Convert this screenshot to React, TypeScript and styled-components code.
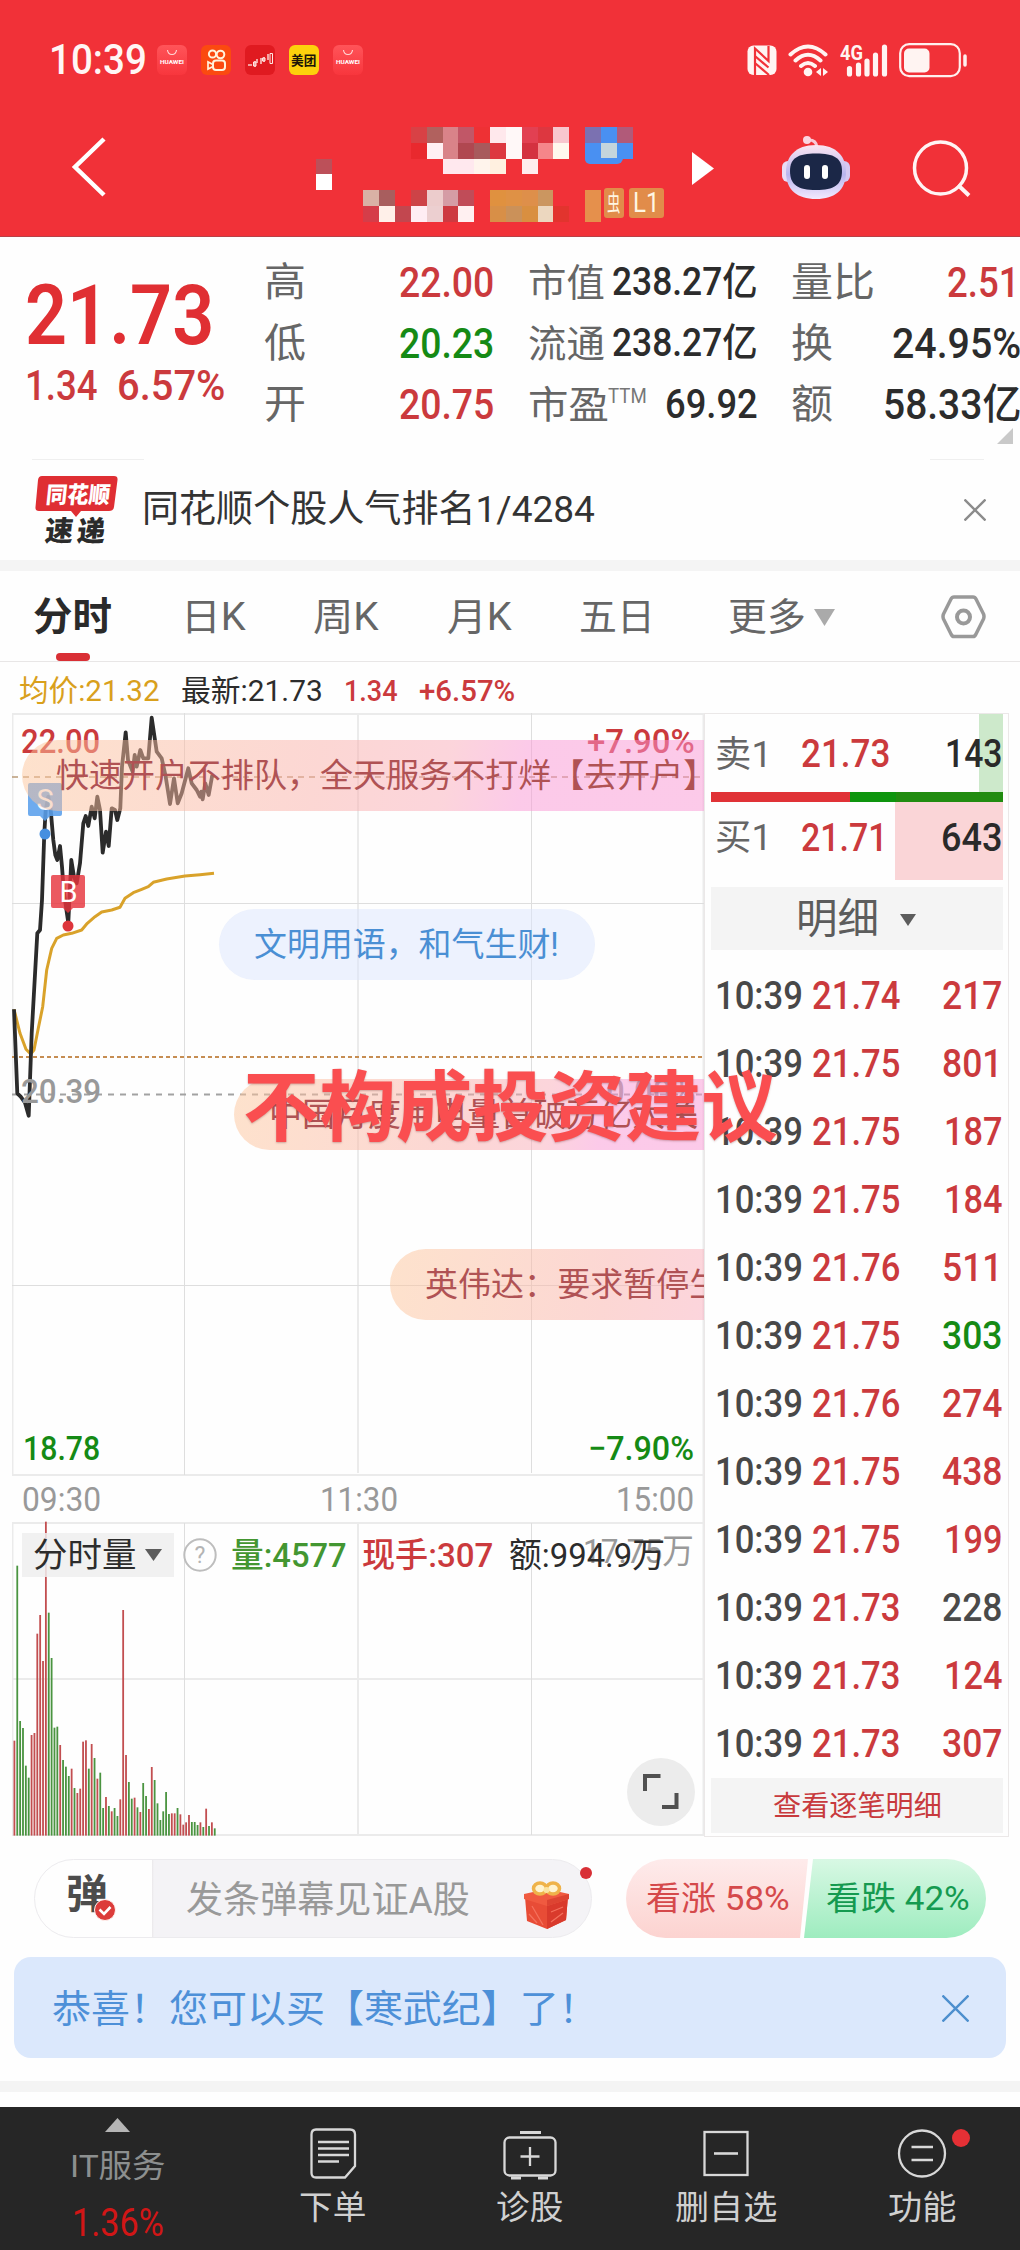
import React, { useLayoutEffect, useRef, useState } from 'react';
import styled, { createGlobalStyle } from 'styled-components';

const RED = '#cb3a3d';
const GREEN = '#158a15';

const GlobalStyle = createGlobalStyle`
  * { box-sizing: border-box; }
  body {
    margin: 0;
    background: #fefefe;
    font-family: Roboto, "Noto Sans CJK SC", sans-serif;
    color: #2c2c2c;
  }
  svg { display: block; flex: none; }
`;

/* Text squeezed horizontally to a given width, like the condensed numerals of the app */
const FitBox = styled.span<{ $w: number; $s: number; $c?: string; $b?: number }>`
  display: inline-block;
  flex: none;
  width: ${(p) => p.$w}px;
  height: ${(p) => p.$s}px;
  line-height: ${(p) => p.$s}px;
  font-size: ${(p) => p.$s}px;
  font-weight: ${(p) => p.$b ?? 400};
  color: ${(p) => p.$c ?? 'inherit'};
  white-space: nowrap;
`;
const FitInner = styled.span<{ $pad: number }>`
  display: inline-block;
  margin-left: ${(p) => -p.$pad}px;
  transform-origin: 0 50%;
  white-space: pre;
`;

type FitProps = { w: number; s: number; c?: string; b?: number; children: React.ReactNode };
function Fit({ w, s, c, b, children }: FitProps) {
  const ref = useRef<HTMLSpanElement>(null);
  const [scale, setScale] = useState(1);
  const pad = s * 0.05;
  useLayoutEffect(() => {
    if (ref.current) setScale((w + pad * 2) / ref.current.offsetWidth);
  }, [w, pad, children]);
  return (
    <FitBox $w={w} $s={s} $c={c} $b={b}>
      <FitInner ref={ref} $pad={pad} style={{ transform: `scaleX(${scale})` }}>
        {children}
      </FitInner>
    </FitBox>
  );
}

const Screen = styled.main`
  display: flex;
  flex-direction: column;
  width: 1020px;
  height: 2250px;
  overflow: hidden;
  background: #fefefe;
`;

/* ---------- header ---------- */
const Header = styled.header`
  flex: none;
  height: 237px;
  background: #f13138;
  border-bottom: 1px solid #b84046;
`;
const StatusBar = styled.div`
  display: flex;
  align-items: center;
  height: 120px;
  padding: 0 52px 0 51px;
`;
const AppIcons = styled.div`
  display: flex;
  gap: 14px;
  margin-left: 12px;
`;
const StatusIcons = styled.div`
  display: flex;
  align-items: center;
  gap: 11px;
  margin-left: auto;
`;
const MeituanIcon = styled.span`
  width: 30px;
  height: 30px;
  border-radius: 6px;
  background: #fdd10c;
  color: #1b1508;
  display: flex;
  align-items: center;
  justify-content: center;
`;
const HuaweiBag = styled.span`
  width: 30px;
  height: 30px;
  border-radius: 6px;
  background: linear-gradient(#ff5459, #f8363d);
`;
const AppBar = styled.div`
  display: grid;
  grid-template-columns: 316px 376px 89px 120px 119px;
  height: 116px;
  color: #fff;
`;
const BackSlot = styled.div`
  padding: 15px 0 0 70px;
`;
const PlaySlot = styled.div`
  padding-top: 32px;
`;
const RobotSlot = styled.div`
  padding-top: 15px;
`;
const SearchSlot = styled.div`
  padding: 19px 0 0 11px;
`;
const TitleSlot = styled.div`
  position: relative;
  padding-top: 7px;
`;
const Mosaic = styled.div`
  display: grid;
  grid-template-columns: repeat(20, 15.83px);
  grid-template-rows: repeat(6, 15.8px);
`;
const Cell = styled.i<{ $c: string }>`
  background: ${(p) => p.$c};
`;
const Badges = styled.div`
  position: absolute;
  left: 288px;
  top: 68px;
  display: flex;
  gap: 5px;
`;
const Badge = styled.span<{ $w: number }>`
  width: ${(p) => p.$w}px;
  height: 30px;
  overflow: hidden;
  border-radius: 3px;
  background: #e18c4a;
  color: #fff6e4;
  display: flex;
  align-items: center;
  justify-content: center;
`;

const _ = '';
const mosaicRows: string[][] = [
  [_, _, _, _, _, _, '#d84145', '#b1615e', '#d98389', '#c15767', '#ee3134', '#ffe8ec', '#fff8f8', '#e24052', '#dd3740', '#f8c6ce', _, '#7b71b1', '#4990f2', '#b15a79'],
  [_, _, _, _, _, _, '#e9292e', '#fff0f3', '#d98389', '#b04750', '#a85a5c', '#dd3840', '#fff8f8', '#d43140', '#f5868a', '#fff8ee', _, '#4990f2', '#c5d5dc', '#4990f2'],
  ['#bc5059', _, _, _, _, _, _, _, '#ffe8ee', '#ffe8ee', '#fff4ec', '#fff0e0', _, '#ffecee', _, _, _, _, _, _],
  ['#ffffff', _, _, _, _, _, _, _, _, _, _, _, _, _, _, _, _, _, _, _],
  [_, _, _, '#d9b1a5', '#a85e5e', _, '#cd4347', '#eccccc', '#d59ca5', '#c04c58', _, '#e0913f', '#df9145', '#de8f4a', '#cb9660', _, _, '#e5904c', _, _],
  [_, _, _, '#d53d49', '#fff0e9', '#c2474f', '#ffedf3', '#eccfd0', '#cd3a41', '#fff0f1', _, '#d88f47', '#cb9159', '#d98f40', '#ecd7bf', '#e2342e', _, '#e5904c', _, _],
];
const Bulge = styled.i`
  position: absolute;
  left: 269px;
  top: 38px;
  width: 38px;
  height: 6px;
  border-radius: 0 0 20px 16px;
  background: #4990f2;
`;

function StatusGlyphs() {
  return (
    <StatusIcons>
      <svg width="30" height="31" viewBox="0 0 30 31">
        <rect x=".5" y=".5" width="29" height="29.500" rx="6" fill="#fff4f2" />
        <path d="M8 30V3.500L21.500 16V1M8.500 11.500 21.500 22.500M8.500 18.500 22 30" fill="none" stroke="#f13138" strokeWidth="2.200" />
      </svg>
      <svg width="41" height="33" viewBox="0 0 41 33" fill="none" stroke="#fff4f2" strokeWidth="4" strokeLinecap="round">
        <path d="M2.500 10.500Q20 -5.500 37.500 10.500M7.500 16.500Q20 5 32.500 16.500M13 22Q20 16 27 22" />
        <circle cx="20" cy="28" r="4.300" fill="#fff4f2" stroke="none" />
        <path d="M33 24v8l-5-4ZM35 24v8l5-4Z" fill="#fff4f2" stroke="none" />
      </svg>
      <svg width="48" height="33" viewBox="0 0 48 33">
        <text x="0" y="16" fontSize="20" fontWeight="700" fill="#fff4f2" textLength="23" lengthAdjust="spacingAndGlyphs">4G</text>
        <path d="M9.500 24.500V30M18.500 21V30M27 17V30M35.500 11V30M44.500 3V30" stroke="#fff4f2" strokeWidth="5.200" strokeLinecap="round" />
      </svg>
      <svg width="69" height="35" viewBox="0 0 69 35">
        <rect x="1.200" y="1.200" width="59.600" height="32" rx="9" fill="none" stroke="#fff0ee" strokeWidth="2.200" />
        <rect x="5" y="5.500" width="25.500" height="24" rx="5" fill="#fff4f2" />
        <path d="M66 13V22" stroke="#fff0ee" strokeWidth="3.500" strokeLinecap="round" />
      </svg>
    </StatusIcons>
  );
}

function Huawei() {
  return (
    <HuaweiBag>
      <svg width="30" height="30" viewBox="0 0 30 30">
        <path d="M10.500 5Q11 9.500 15 9.500Q19 9.500 19.500 5" fill="none" stroke="#ffd9d8" strokeWidth="1.100" />
        <text x="3" y="19.300" fontSize="6" fontWeight="700" fill="#fff" textLength="24" lengthAdjust="spacingAndGlyphs">HUAWEI</text>
      </svg>
    </HuaweiBag>
  );
}

/* ---------- quote ---------- */
const Quote = styled.section`
  flex: none;
  position: relative;
  display: grid;
  grid-template-columns: 265px 264px 263px 228px;
  height: 222px;
`;
const PriceCol = styled.div`
  padding: 37px 0 0 29px;
`;
const ChangeRow = styled.div`
  display: flex;
  gap: 24px;
  margin: 7px 0 0 -2px;
`;
const StatCol = styled.div<{ $r: number }>`
  padding: 15px ${(p) => p.$r}px 0 1px;
`;
const StatRow = styled.div<{ $r?: number }>`
  display: flex;
  align-items: center;
  justify-content: space-between;
  height: 61px;
  padding-right: ${(p) => p.$r ?? 0}px;
`;
const PeLabel = styled.span`
  display: flex;
  gap: 2px;
`;
const Corner = styled.i`
  position: absolute;
  right: 7px;
  bottom: 15px;
  border: 8px solid transparent;
  border-right-color: #c9c9c9;
  border-bottom-color: #c9c9c9;
`;

/* ---------- notice ---------- */
const Notice = styled.section`
  flex: none;
  display: flex;
  align-items: center;
  height: 101px;
  padding: 0 34px;
  background:
    linear-gradient(#efefef, #efefef) 32px 0 / 112px 1px no-repeat,
    linear-gradient(#efefef, #efefef) 930px 0 / 54px 1px no-repeat;
`;
const NoticeLogo = styled.div`
  width: 110px;
  height: 84px;
  padding-top: 7px;
`;
const NoticeClose = styled.div`
  margin-left: auto;
`;
const Band = styled.div`
  flex: none;
  height: 11px;
  background: #f4f4f4;
`;

/* ---------- tabs ---------- */
const Tabs = styled.nav`
  flex: none;
  display: grid;
  grid-template-columns: 148px 132px 134px 132px 149px 211px 45px;
  padding-left: 35px;
  height: 91px;
  border-bottom: 1px solid #e8e6e6;
`;
const Tab = styled.div`
  display: flex;
  align-items: center;
  gap: 10px;
  padding-top: 2px;
  color: #666;
`;
const ActiveTab = styled.div`
  display: flex;
  flex-direction: column;
  justify-content: flex-end;
  gap: 16px;
  color: #2a2a2a;
  &::after {
    content: '';
    width: 34px;
    height: 8px;
    margin-left: 21px;
    border-radius: 4px;
    background: #d92f35;
  }
`;

/* ---------- main ---------- */
const Main = styled.section`
  flex: none;
  position: relative;
  display: flex;
  height: 1176px;
`;
const ChartCol = styled.div`
  width: 704px;
`;
const InfoRow = styled.div`
  display: flex;
  align-items: center;
  height: 46px;
  padding: 11px 0 0 20px;
  gap: 24px;
`;
const ChartArea = styled.div`
  position: relative;
  height: 1130px;
  margin-left: 12px;
  overflow: hidden;
`;
const Mark = styled.div<{ $x: number; $y: number }>`
  position: absolute;
  display: flex;
  left: ${(p) => p.$x - 12}px;
  top: ${(p) => p.$y - 708}px;
  transform: translateY(-50%);
`;
/* $end is the distance from the left tip at which the gradient turns fully pink */
const Danmu = styled.div<{ $x: number; $y: number; $w?: number; $blue?: boolean; $in?: number; $end?: number }>`
  position: absolute;
  left: ${(p) => p.$x - 12}px;
  top: ${(p) => p.$y - 708}px;
  width: ${(p) => p.$w ?? 704 - p.$x}px;
  height: 71px;
  overflow: hidden;
  display: flex;
  align-items: center;
  padding-left: ${(p) => p.$in ?? 37}px;
  border-radius: ${(p) => (p.$blue ? '36px' : '36px 0 0 36px')};
  color: ${(p) => (p.$blue ? '#4a8fd4' : '#b05254')};
  background: ${(p) =>
    p.$blue
      ? 'rgba(219,230,253,.5)'
      : `linear-gradient(100deg, rgba(253,198,155,.5), rgba(250,176,170,.5) ${(p.$end ?? 480) * 0.6}px, rgba(250,172,185,.5) ${(p.$end ?? 480) * 0.85}px, rgba(250,150,212,.5) ${p.$end ?? 480}px)`};
`;
const VolumeHead = styled.div`
  position: absolute;
  left: 10px;
  top: 825px;
  display: flex;
  align-items: center;
  height: 44px;
`;
const VolumeTag = styled.div`
  display: flex;
  align-items: center;
  gap: 10px;
  width: 152px;
  height: 44px;
  padding-left: 13px;
  margin-right: 9px;
  background: rgba(238, 238, 238, 0.85);
`;
const VolumeStats = styled.div`
  display: flex;
  gap: 19px;
  margin-left: 16px;
`;
const ExpandButton = styled.div`
  position: absolute;
  left: 615px;
  top: 1050px;
  width: 68px;
  height: 68px;
  border-radius: 50%;
  background: #ececec;
  display: grid;
  place-items: center;
`;
const Watermark = styled.div`
  position: absolute;
  left: 247px;
  top: 409px;
  height: 80px;
  text-shadow: 0 1px 2px rgba(120, 60, 60, 0.35);
`;

/* ---------- order panel ---------- */
const Panel = styled.aside`
  width: 305px;
  margin-top: 51px;
  height: 1124px;
  padding: 0 5px 0 6px;
  border: 1px solid #ebe8e8;
`;
const Depth = styled.div<{ $from: number; $bg: string; $h: number; $shift: number }>`
  display: grid;
  grid-template-columns: 86px 1fr auto;
  align-items: center;
  height: ${(p) => p.$h}px;
  padding: ${(p) => Math.max(p.$shift, 0)}px 2px ${(p) => Math.max(-p.$shift, 0)}px 6px;
  color: #2a2a2a;
  background: linear-gradient(90deg, transparent ${(p) => p.$from}px, ${(p) => p.$bg} ${(p) => p.$from}px);
`;
const RatioBar = styled.div`
  height: 10px;
  background: linear-gradient(90deg, #e03236 139px, #0e950e 139px, #0e950e 185px, #218c10 185px);
`;
const DetailHead = styled.div`
  display: flex;
  align-items: center;
  justify-content: center;
  gap: 22px;
  height: 63px;
  margin: 7px 0 12px;
  padding: 2px 0 0;
  background: #f4f4f4;
  color: #5c5c5c;
`;
const Tick = styled.div`
  display: grid;
  grid-template-columns: 97px 1fr auto;
  align-items: center;
  height: 68px;
  padding: 1px 2px 0 6px;
`;
const DetailLink = styled.div`
  display: flex;
  align-items: center;
  justify-content: center;
  height: 55px;
  padding-top: 2px;
  background: #f4f4f4;
`;

/* ---------- comment, banner ---------- */
const CommentRow = styled.section`
  flex: none;
  display: flex;
  height: 119px;
  padding: 21px 34px 0;
`;
const CommentPill = styled.div`
  position: relative;
  display: flex;
  width: 558px;
  height: 79px;
  border: 1px solid #ecebee;
  border-radius: 40px;
  background: linear-gradient(90deg, #fefefe 117px, #eae8ea 117px, #f4f3f6 119px);
`;
const DanToggle = styled.div`
  position: relative;
  width: 117px;
  padding: 15px 0 0 33px;
`;
const CheckBadge = styled.div`
  position: absolute;
  left: 59px;
  top: 39px;
`;
const Placeholder = styled.div`
  flex: 1;
  display: flex;
  align-items: center;
  padding: 4px 0 0 36px;
`;
const Gift = styled.div`
  padding: 20px 21px 0 0;
`;
const PillDot = styled.i`
  position: absolute;
  right: -1px;
  top: 7px;
  width: 12px;
  height: 12px;
  border-radius: 50%;
  background: #d83036;
`;
const Vote = styled.div`
  display: flex;
  margin-left: 34px;
  width: 360px;
  height: 79px;
  border-radius: 40px;
  overflow: hidden;
`;
const VoteUp = styled.div`
  width: 182px;
  padding: 23px 0 0 22px;
  background: linear-gradient(#feebeb, #fcd3d0);
  clip-path: polygon(0 0, 100% 0, 174px 100%, 0 100%);
`;
const VoteDown = styled.div`
  width: 182px;
  margin-left: -4px;
  padding: 23px 0 0 24px;
  background: linear-gradient(#d8f8e4, #9eecbf);
  clip-path: polygon(9px 0, 100% 0, 100% 100%, 0 100%);
`;
const Banner = styled.section`
  flex: none;
  display: flex;
  align-items: center;
  justify-content: space-between;
  height: 101px;
  margin: 0 14px 23px;
  padding: 2px 37px 0 40px;
  border-radius: 17px;
  background: #dbe8fc;
`;

/* ---------- bottom nav ---------- */
const BottomNav = styled.nav`
  flex: none;
  display: grid;
  grid-template-columns: 235px 196px 197px 196px 196px;
  height: 143px;
  margin-top: 15px;
  background: #262626;
  color: #d0d0d0;
`;
const NavItem = styled.div`
  position: relative;
  display: flex;
  flex-direction: column;
  align-items: center;
  gap: 10px;
  padding-top: 20px;
`;
const SectorItem = styled.div`
  display: flex;
  flex-direction: column;
  align-items: center;
  padding-top: 11px;
`;
const SectorName = styled.div`
  height: 33px;
  margin: 18px 0 21px;
`;
const NavDot = styled.i`
  position: absolute;
  right: 50px;
  top: 22px;
  width: 18px;
  height: 18px;
  border-radius: 50%;
  background: #e53035;
`;

/* ---------- data ---------- */
const ticks: [string, string, string?][] = [
  ['21.74', '217'],
  ['21.75', '801'],
  ['21.75', '187'],
  ['21.75', '184'],
  ['21.76', '511'],
  ['21.75', '303', GREEN],
  ['21.76', '274'],
  ['21.75', '438'],
  ['21.75', '199'],
  ['21.73', '228', '#4a4a4a'],
  ['21.73', '124'],
  ['21.73', '307'],
];

const pricePts: [number, number][] = [
  [42, 928], [52, 1180], [62, 1190], [75, 1208], [86, 1247], [95, 1000], [112, 700], [120, 690], [126, 600], [133, 400],
  [137, 330], [145, 290], [152, 330], [160, 420], [166, 465], [172, 480], [180, 438], [186, 500], [192, 580], [205, 668],
  [214, 480], [222, 530], [230, 550], [240, 490], [250, 370], [257, 348], [265, 378], [275, 320], [284, 355], [292, 290],
  [300, 330], [308, 458], [318, 395], [326, 438], [335, 325], [345, 330], [352, 360], [361, 325], [366, 200], [377, 97],
  [384, 180], [390, 195], [398, 215], [404, 165], [410, 200], [421, 150], [430, 175], [445, 175], [455, 53], [470, 155],
  [485, 175], [497, 230], [510, 312], [522, 235], [533, 310], [545, 280], [565, 205], [575, 250], [590, 270], [600, 290],
  [604, 275], [608, 298], [616, 250], [626, 285], [637, 225],
];
const avgPts: [number, number][] = [
  [42, 928], [60, 1000], [78, 1048], [92, 1062], [102, 1050], [115, 985], [128, 920], [140, 810], [155, 745], [170, 715],
  [190, 705], [215, 700], [245, 690], [262, 670], [285, 650], [305, 636], [335, 630], [360, 622], [375, 595], [400, 578],
  [425, 568], [445, 560], [460, 547], [500, 537], [555, 528], [600, 524], [642, 520],
];
const toPoints = (pts: [number, number][]) => pts.map(([x, y]) => `${(x / 3).toFixed(1)},${(700 + y / 3).toFixed(1)}`).join(' ');

const volumes =
  'r1052 g527 g993 g1014 g1127 g1163 r1035 r1029 r731 r675 r813 r395 g668 g804 g1013 g1010 r1065 g1110 g1130 g1158 r1136 g1194 r1209 r1196 r1055 r1051 g1136 r1062 g1104 r1166 g1148 g1254 r1221 g1248 r1264 g1254 g1278 r1228 r660 r1095 g1176 g1226 r1223 g1252 r1266 g1179 g1218 r1257 r1131 g1170 g1240 g1290 g1264 g1206 g1272 r1270 r1270 g1254 r1273 r1304 r1297 r1275 g1296 g1296 g1305 r1297 g1311 r1256 g1308 r1297 g1315'.split(' ');

function Chart() {
  return (
    <svg width="692" height="1130" viewBox="12 708 692 1130">
      <path d="M12 714H704M12 1475H704M12 1523H704M12 1679H704M12 1835H704M12.500 713V1475M12.500 1523V1835M703.500 713V1835M358 713V1473M358 1523V1835" stroke="#ebebeb" strokeWidth="2" />
      <path d="M12 903.500H704M12 1285.500H704M184.500 713V1475M531.500 713V1473M184.500 1523V1835M531.500 1523V1835" stroke="#dedede" />
      <path d="M12 777H704" stroke="#b99b78" strokeWidth="1.500" strokeDasharray="6 5" />
      <path d="M12 1057H704" stroke="#c68d52" strokeWidth="2" strokeDasharray="4 3" />
      <path d="M12 1094.500H704" stroke="#a2a2a2" strokeWidth="2" strokeDasharray="6 6" />
      <polyline points={toPoints(avgPts)} fill="none" stroke="#d9a22a" strokeWidth="3" strokeLinejoin="round" />
      <polyline points={toPoints(pricePts)} fill="none" stroke="#2b2b2b" strokeWidth="3.800" strokeLinejoin="round" />
      {volumes.map((v, i) => {
        const top = 1390 + Number(v.slice(1)) / 3;
        return (
          <rect key={i} x={13.500 + i * 2.862} y={top} width="1.800" height={1835.600 - top} fill={v[0] === 'r' ? '#c24e50' : '#4a9440'} />
        );
      })}
      <g fontSize="29" textAnchor="middle" fill="#fff">
        <path d="M30 783H60Q62 783 62 785V814Q62 816 60 816H50L45 821L40 816H30Q28 816 28 814V785Q28 783 30 783Z" fill="#5a9fec" fillOpacity=".88" />
        <text x="45" y="810" fill="#f4f8ff">S</text>
        <circle cx="45" cy="834" r="5.500" fill="#468fe0" />
        <path d="M53 875H83Q85 875 85 877V906Q85 908 83 908H73L68 913L63 908H53Q51 908 51 906V877Q51 875 53 875Z" fill="#e6353d" fillOpacity=".82" />
        <text x="68.500" y="902">B</text>
        <circle cx="68" cy="926" r="5.500" fill="#dd353c" />
      </g>
    </svg>
  );
}

export default function App() {
  return (
    <Screen>
      <GlobalStyle />
      <Header>
        <StatusBar>
          <Fit w={94} s={42} b={500} c="#fff6f5">10:39</Fit>
          <AppIcons>
            <Huawei />
            <svg width="30" height="30" viewBox="0 0 30 30">
              <rect width="30" height="30" rx="6" fill="#fb4a10" />
              <g fill="none" stroke="#fff3dc" strokeWidth="2">
                <circle cx="11.500" cy="9" r="3.600" />
                <circle cx="19.500" cy="9.500" r="3.800" />
                <rect x="12" y="15.500" width="12" height="9.500" rx="3" />
                <path d="M7 17v7l5-2.500v-2Z" strokeWidth="1.700" />
              </g>
            </svg>
            <svg width="30" height="30" viewBox="0 0 30 30">
              <rect width="30" height="30" rx="6" fill="#e01a20" />
              <path d="M3 20h4M10 22v-6M12 14v4M16 19v-6M19 17v-5M23 15v-6" stroke="#fbc9c5" strokeWidth="1.600" />
              <path d="M8.500 17h2.500v4h-2.500ZM17.500 13h2.500v3h-2.500ZM25 8.500h2.500v10H25Z" fill="none" stroke="#ffe8e5" strokeWidth="1" />
            </svg>
            <MeituanIcon><Fit w={24} s={13} b={700}>美团</Fit></MeituanIcon>
            <Huawei />
          </AppIcons>
          <StatusGlyphs />
        </StatusBar>
        <AppBar>
          <BackSlot>
            <svg width="38" height="62" viewBox="70 135 38 62">
              <path d="M104 139 75 167 104 195" fill="none" stroke="#fff" strokeWidth="4.500" />
            </svg>
          </BackSlot>
          <TitleSlot>
            <Mosaic>{mosaicRows.flat().map((c, i) => <Cell key={i} $c={c || 'transparent'} />)}</Mosaic>
            <Bulge />
            <Badges>
              <Badge $w={20}><Fit w={11} s={23}>虫</Fit></Badge>
              <Badge $w={35}><Fit w={24} s={27}>L1</Fit></Badge>
            </Badges>
          </TitleSlot>
          <PlaySlot>
            <svg width="23" height="34"><path d="M0 0 22 16.500 0 33Z" fill="#fff" /></svg>
          </PlaySlot>
          <RobotSlot>
            <svg width="70" height="65" viewBox="780 135 70 65">
              <defs>
                <linearGradient id="shell" x1="0" y1="0" x2="0" y2="1">
                  <stop offset="0" stopColor="#fbe6f2" />
                  <stop offset=".55" stopColor="#b9b4ee" />
                  <stop offset="1" stopColor="#f3eaff" />
                </linearGradient>
              </defs>
              <path d="M806 140Q815 139 816 147" fill="none" stroke="#f8c9d6" strokeWidth="3" />
              <circle cx="806" cy="140" r="4" fill="#fbd4e0" />
              <rect x="781" y="161" width="12" height="21" rx="6" fill="#e9dcf6" />
              <rect x="837" y="161" width="12" height="21" rx="6" fill="#d5c8f2" />
              <path d="M815 145C836 145 845 157 845 172C845 190 834 199 815 199C796 199 785 190 785 172C785 157 794 145 815 145Z" fill="url(#shell)" />
              <path d="M815 153.500C833 153.500 841 158 841 171C841 185 833 190 815 190C797 190 789 185 789 171C789 158 797 153.500 815 153.500Z" fill="#1b2747" />
              <path d="M806 168V176M824 168V176" stroke="#fff" strokeWidth="6" strokeLinecap="round" />
            </svg>
          </RobotSlot>
          <SearchSlot>
            <svg width="60" height="60" viewBox="911 139 60 60" fill="none" stroke="#fff4f4" strokeWidth="3.500">
              <circle cx="939.500" cy="168" r="26" />
              <path d="M957 185 968 195.500" strokeWidth="4" />
            </svg>
          </SearchSlot>
        </AppBar>
      </Header>

      <Quote>
        <PriceCol>
          <Fit w={181} s={84} b={600} c="#e02f33">21.73</Fit>
          <ChangeRow>
            <Fit w={68} s={42} b={500} c={RED}>1.34</Fit>
            <Fit w={104} s={42} b={500} c={RED}>6.57%</Fit>
          </ChangeRow>
        </PriceCol>
        <StatCol $r={37}>
          <StatRow><Fit w={38} s={40} c="#666">高</Fit><Fit w={91} s={42} b={500} c={RED}>22.00</Fit></StatRow>
          <StatRow><Fit w={38} s={40} c="#666">低</Fit><Fit w={91} s={42} b={500} c={GREEN}>20.23</Fit></StatRow>
          <StatRow><Fit w={38} s={40} c="#666">开</Fit><Fit w={91} s={42} b={500} c={RED}>20.75</Fit></StatRow>
        </StatCol>
        <StatCol $r={36}>
          <StatRow><Fit w={73} s={38} c="#666">市值</Fit><Fit w={142} s={39} b={500}>238.27亿</Fit></StatRow>
          <StatRow><Fit w={73} s={38} c="#666">流通</Fit><Fit w={142} s={39} b={500}>238.27亿</Fit></StatRow>
          <StatRow>
            <PeLabel><Fit w={77} s={38} c="#666">市盈</Fit><Fit w={37} s={21} c="#777">TTM</Fit></PeLabel>
            <Fit w={89} s={41} b={500}>69.92</Fit>
          </StatRow>
        </StatCol>
        <StatCol $r={1}>
          <StatRow $r={2}><Fit w={80} s={40} c="#666">量比</Fit><Fit w={68} s={42} b={500} c={RED}>2.51</Fit></StatRow>
          <StatRow><Fit w={38} s={40} c="#666">换</Fit><Fit w={125} s={42} b={500}>24.95%</Fit></StatRow>
          <StatRow><Fit w={38} s={40} c="#666">额</Fit><Fit w={134} s={42} b={500}>58.33亿</Fit></StatRow>
        </StatCol>
        <Corner />
      </Quote>

      <Notice>
        <NoticeLogo>
          <svg width="86" height="72" viewBox="34 474 86 72">
            <path d="M42 475H114Q118 475 117.500 479L114 506Q113.500 510 109 510H81L76 516L71 510H39Q35 510 35.500 506L38 479Q38.500 475 42 475Z" fill="#df2e33" />
            <g fontWeight="900" transform="skewX(-6)">
              <text x="98" y="502" fontSize="23" fill="#fff" textLength="64" lengthAdjust="spacingAndGlyphs">同花顺</text>
              <text x="101" y="540" fontSize="28" fill="#2b2b2b" textLength="60" lengthAdjust="spacing">速递</text>
            </g>
          </svg>
        </NoticeLogo>
        <Fit w={449} s={37} c="#333">同花顺个股人气排名1/4284</Fit>
        <NoticeClose>
          <svg width="22" height="22"><path d="M.5 .5 21.500 21.500M21.500 .5 .5 21.500" stroke="#8c8c8c" strokeWidth="2.400" /></svg>
        </NoticeClose>
      </Notice>
      <Band />

      <Tabs>
        <ActiveTab><Fit w={75} s={39} b={700}>分时</Fit></ActiveTab>
        <Tab><Fit w={61} s={38}>日K</Fit></Tab>
        <Tab><Fit w={62} s={38}>周K</Fit></Tab>
        <Tab><Fit w={61} s={38}>月K</Fit></Tab>
        <Tab><Fit w={72} s={38}>五日</Fit></Tab>
        <Tab>
          <Fit w={74} s={38}>更多</Fit>
          <svg width="21" height="17"><path d="M0 0H21L10.500 17Z" fill="#aaa" /></svg>
        </Tab>
        <Tab>
          <svg width="45" height="44" fill="none" stroke="#999" strokeWidth="3.500" strokeLinejoin="round">
            <path d="M13 2H32Q34 2 35 4L42.500 19Q43.500 21.500 42.500 24L35 39Q34 41.500 32 41.500H13Q11 41.500 10 39L2.500 24Q1.500 21.500 2.500 19L10 4Q11 2 13 2Z" />
            <circle cx="22.500" cy="22" r="6.500" strokeWidth="4" />
          </svg>
        </Tab>
      </Tabs>

      <Main>
        <ChartCol>
          <InfoRow>
            <Fit w={138} s={30} c="#d9a01c">均价:21.32</Fit>
            <Fit w={139} s={30}>最新:21.73</Fit>
            <Fit w={51} s={30} b={500} c={RED}>1.34</Fit>
            <Fit w={93} s={30} b={500} c={RED}>+6.57%</Fit>
          </InfoRow>
          <ChartArea>
            <Chart />
            <Mark $x={23} $y={741}><Fit w={76} s={34} b={500} c={RED}>22.00</Fit></Mark>
            <Mark $x={589} $y={741}><Fit w={104} s={34} b={500} c={RED}>+7.90%</Fit></Mark>
            <Mark $x={23} $y={1091}><Fit w={77} s={34} b={500} c="#999">20.39</Fit></Mark>
            <Mark $x={608} $y={1091}><Fit w={86} s={34} b={500} c="#999">0.00%</Fit></Mark>
            <Mark $x={25} $y={1448}><Fit w={74} s={34} b={500} c={GREEN}>18.78</Fit></Mark>
            <Mark $x={590} $y={1448}><Fit w={103} s={34} b={500} c={GREEN}>−7.90%</Fit></Mark>
            <Mark $x={24} $y={1499}><Fit w={76} s={34} c="#999">09:30</Fit></Mark>
            <Mark $x={322} $y={1499}><Fit w={75} s={34} c="#999">11:30</Fit></Mark>
            <Mark $x={618} $y={1499}><Fit w={75} s={34} c="#999">15:00</Fit></Mark>
            <Mark $x={585} $y={1551}><Fit w={107} s={34} c="#999">17.75万</Fit></Mark>
            <Danmu $x={22} $y={740} $in={36} $end={500}><Fit w={657} s={33}>快速开户不排队，全天服务不打烊【去开户】</Fit></Danmu>
            <Danmu $x={219} $y={909} $w={376} $blue><Fit w={302} s={33}>文明用语，和气生财!</Fit></Danmu>
            <Danmu $x={234} $y={1079} $end={370}><Fit w={426} s={33}>中国月度用电量首破万亿大关</Fit></Danmu>
            <Danmu $x={390} $y={1249} $end={370}><Fit w={294} s={33}>英伟达：要求暂停生</Fit></Danmu>
            <VolumeHead>
              <VolumeTag>
                <Fit w={100} s={34}>分时量</Fit>
                <svg width="17" height="12"><path d="M0 0H17L8.500 12Z" fill="#5c5c5c" /></svg>
              </VolumeTag>
              <svg width="34" height="34">
                <circle cx="17" cy="17" r="15.700" fill="none" stroke="#bdbdbd" strokeWidth="2" />
                <text x="17" y="25" fontSize="23" textAnchor="middle" fill="#b4b4b4">?</text>
              </svg>
              <VolumeStats>
                <Fit w={112} s={34} b={500} c="#439631">量:4577</Fit>
                <Fit w={128} s={34} b={500} c={RED}>现手:307</Fit>
                <Fit w={153} s={34}>额:994.9万</Fit>
              </VolumeStats>
            </VolumeHead>
            <ExpandButton>
              <svg width="36" height="36" fill="none" stroke="#505050" strokeWidth="4"><path d="M17.500 2H2V17M33.500 19V33H19" /></svg>
            </ExpandButton>
          </ChartArea>
        </ChartCol>

        <Panel>
          <Depth $from={268} $bg="#cde9cb" $h={78} $shift={3}>
            <Fit w={53} s={36} c="#666">卖1</Fit>
            <Fit w={86} s={39} b={500} c={RED}>21.73</Fit>
            <Fit w={54} s={39} b={500}>143</Fit>
          </Depth>
          <RatioBar />
          <Depth $from={184} $bg="#fad5d7" $h={78} $shift={-6}>
            <Fit w={53} s={36} c="#666">买1</Fit>
            <Fit w={83} s={39} b={500} c={RED}>21.71</Fit>
            <Fit w={58} s={39} b={500}>643</Fit>
          </Depth>
          <DetailHead>
            <Fit w={79} s={41}>明细</Fit>
            <svg width="16" height="12"><path d="M0 0H16L8 12Z" fill="#5c5c5c" /></svg>
          </DetailHead>
          {ticks.map(([price, vol, color], i) => (
            <Tick key={i}>
              <Fit w={84} s={39} c="#484848" b={500}>10:39</Fit>
              <Fit w={85} s={39} b={500} c={RED}>{price}</Fit>
              <Fit w={vol[0] === '1' ? 55 : 57} s={39} b={500} c={color ?? RED}>{vol}</Fit>
            </Tick>
          ))}
          <DetailLink><Fit w={166} s={28} c="#c83a3d">查看逐笔明细</Fit></DetailLink>
        </Panel>
        <Watermark><Fit w={527} s={77} b={700} c="#fa4e50">不构成投资建议</Fit></Watermark>
      </Main>

      <CommentRow>
        <CommentPill>
          <DanToggle>
            <Fit w={38} s={40} b={700} c="#4c4c4c">弹</Fit>
            <CheckBadge>
              <svg width="22" height="22">
                <circle cx="11" cy="11" r="10.500" fill="#dc3c3a" stroke="#fff3f0" />
                <path d="M5.500 10.500 10 15 16.500 8" fill="none" stroke="#fff" strokeWidth="2.600" />
              </svg>
            </CheckBadge>
          </DanToggle>
          <Placeholder><Fit w={280} s={37} c="#999">发条弹幕见证A股</Fit></Placeholder>
          <Gift>
            <svg width="47" height="52" viewBox="0 0 47 52">
              <path d="M2 17 24 23 45 16 43 40 24 49 4 41Z" fill="#e84c36" />
              <path d="M24 23 45 16 43 40 24 49Z" fill="#d93a2c" />
              <path d="M1 14 24 9 46 14V19L24 26 1 19Z" fill="#f05a40" />
              <path d="M24 20 46 14V19L24 26Z" fill="#dd4432" />
              <path d="M9 26 20 45M28 32 40 27M28 42 40 33M6 34 14 43" stroke="#f4705c" strokeWidth="1.300" />
              <g fill="#fff3cf" stroke="#efb34a" strokeWidth="3.500">
                <ellipse cx="17" cy="8.500" rx="6.500" ry="5.500" />
                <ellipse cx="30" cy="8.500" rx="6.500" ry="5.500" />
              </g>
              <circle cx="23.500" cy="10" r="3" fill="#fbe3a0" />
            </svg>
          </Gift>
          <PillDot />
        </CommentPill>
        <Vote>
          <VoteUp><Fit w={140} s={33} c="#d5494b">看涨 58%</Fit></VoteUp>
          <VoteDown><Fit w={140} s={33} c="#159a50">看跌 42%</Fit></VoteDown>
        </Vote>
      </CommentRow>

      <Banner>
        <Fit w={542} s={38} c="#4d90d8">恭喜！您可以买【寒武纪】了！</Fit>
        <svg width="27" height="27"><path d="M.5 .5 26.500 26.500M26.500 .5 .5 26.500" stroke="#4d8fce" strokeWidth="2.400" /></svg>
      </Banner>
      <Band />

      <BottomNav>
        <SectorItem>
          <svg width="25" height="14"><path d="M12.500 0 25 14H0Z" fill="#b5b5b5" /></svg>
          <SectorName><Fit w={92} s={32} c="#8c8f8f">IT服务</Fit></SectorName>
          <Fit w={88} s={38} c="#d11616">1.36%</Fit>
        </SectorItem>
        <NavItem>
          <svg width="47" height="54" fill="none" stroke="#d8d8d8" strokeWidth="2.300">
            <path d="M6 2.500H40Q45 2.500 45 7.500V39L35 50.500H6Q1.500 50.500 1.500 46V7.500Q1.500 2.500 6 2.500Z" />
            <path d="M8 15H39M8 21.500H39M8 28H39M8 34.500H29" strokeWidth="2.600" />
          </svg>
          <Fit w={64} s={33}>下单</Fit>
        </NavItem>
        <NavItem>
          <svg width="54" height="54" fill="none" stroke="#d8d8d8" strokeWidth="2.300">
            <rect x="1.500" y="10.500" width="51" height="38" rx="5" />
            <path d="M17 5.500H38M8 51H18M35 51H45" strokeWidth="3" />
            <path d="M27 20V39M17.500 29.500H36.500" />
          </svg>
          <Fit w={64} s={33}>诊股</Fit>
        </NavItem>
        <NavItem>
          <svg width="46" height="54" fill="none" stroke="#d8d8d8" strokeWidth="2.300">
            <rect x="1.500" y="5" width="43" height="43" />
            <path d="M11 26.500H35" strokeWidth="2.600" />
          </svg>
          <Fit w={99} s={33}>删自选</Fit>
        </NavItem>
        <NavItem>
          <svg width="50" height="54" fill="none" stroke="#d8d8d8" strokeWidth="2.300">
            <circle cx="25" cy="26.500" r="23" />
            <path d="M14.500 20H36M14.500 33H36" strokeWidth="2.600" />
          </svg>
          <Fit w={65} s={33}>功能</Fit>
          <NavDot />
        </NavItem>
      </BottomNav>
    </Screen>
  );
}
